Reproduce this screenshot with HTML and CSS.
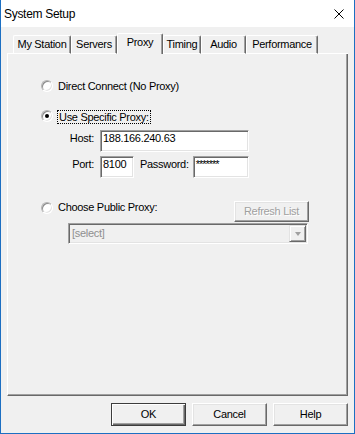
FILE: index.html
```html
<!DOCTYPE html>
<html lang="en">
<head>
    <meta charset="UTF-8">
    <title>System Setup</title>
    <link rel="stylesheet" href="styles.css">
</head>
<body>
    <div class="window">
        <div class="titlebar">
            <span class="title">System Setup</span>
            <svg class="close" width="10" height="10" viewBox="0 0 10 10">
                <path d="M0.5 0.5 L9.5 9.5 M9.5 0.5 L0.5 9.5" stroke="#000" stroke-width="1" fill="none"/>
            </svg>
        </div>

        <div class="client">
            <div class="tabstrip">
                <span class="strip-edge"></span>
                <div class="tab tab-station">My Station</div>
                <div class="tab tab-servers">Servers</div>
                <div class="tab tab-proxy active">Proxy</div>
                <div class="tab tab-timing">Timing</div>
                <div class="tab tab-audio">Audio</div>
                <div class="tab tab-perf">Performance</div>
                <span class="strip-fill"></span>
            </div>

            <div class="panel">
                <div class="option">
                    <span class="radio"></span>
                    <span class="option-text">Direct Connect (No Proxy)</span>
                </div>

                <div class="option option-specific">
                    <span class="radio checked"></span>
                    <span class="option-text focus">Use Specific Proxy:</span>
                </div>

                <div class="fields">
                    <div class="field-row">
                        <span class="field-label">Host:</span>
                        <span class="edit edit-host">188.166.240.63</span>
                    </div>
                    <div class="field-row">
                        <span class="field-label">Port:</span>
                        <span class="edit edit-port">8100</span>
                        <span class="pw-label">Password:</span>
                        <span class="edit edit-pass">*******</span>
                    </div>
                </div>

                <div class="option option-public">
                    <span class="radio"></span>
                    <span class="option-text">Choose Public Proxy:</span>
                    <span class="btn btn-refresh disabled">Refresh List</span>
                </div>

                <div class="combo">
                    <span class="combo-text">[select]</span>
                    <span class="combo-drop"><span class="arrow"></span></span>
                </div>
            </div>

            <div class="buttons">
                <span class="btn btn-default">OK</span>
                <span class="btn">Cancel</span>
                <span class="btn">Help</span>
            </div>
        </div>
    </div>
</body>
</html>
```

FILE: styles.css
```css
* {
    box-sizing: border-box;
}
body {
    margin: 0;
    font-family: "Liberation Sans", Arial, sans-serif;
    font-size: 11px;
    letter-spacing: -0.3px;
    color: #000;
}
.window {
    width: 355px;
    height: 434px;
    border: 1px solid #1c6fc2;
    border-top: none;
    display: flex;
    flex-direction: column;
    background: #f0f0f0;
}
.titlebar {
    height: 27px;
    background: #fff;
    display: flex;
    align-items: center;
    padding: 0 10px 0 3px;
}
.title {
    flex: 1;
    font-size: 12px;
}
.close {
    display: block;
}
.client {
    flex: 1;
    display: flex;
    flex-direction: column;
    padding: 6px 6px 7px;
}

/* tabs */
.tabstrip {
    height: 21px;
    display: flex;
    align-items: flex-end;
}
.strip-edge {
    width: 6px;
    border-bottom: 1px solid #fff;
}
.strip-fill {
    flex: 1;
    border-bottom: 1px solid #fff;
}
.tab {
    flex: none;
    height: 19px;
    padding-top: 2px;
    line-height: 13px;
    text-align: center;
    border: 1px solid #fff;
    border-right-color: #696969;
    border-radius: 2px 2px 0 0;
    box-shadow: inset -1px 0 0 #a0a0a0;
}
.tab.active {
    height: 21px;
    border-bottom: none;
}
.tab-station { width: 58px; }
.tab-servers { width: 46px; }
.tab-proxy { width: 46px; }
.tab-timing { width: 38px; }
.tab-audio { width: 45px; }
.tab-perf { width: 72px; }

/* page body */
.panel {
    flex: 1;
    display: flex;
    flex-direction: column;
    padding: 26px 38px 0 33px;
    border-left: 1px solid #fff;
    border-right: 1px solid #696969;
    border-bottom: 1px solid #696969;
    box-shadow: inset -1px -1px 0 #a0a0a0;
}
.option {
    display: flex;
    align-items: flex-start;
    line-height: 13px;
}
.option-text {
    margin-left: 5px;
}
.option-specific {
    margin-top: 17px;
}
.option-specific .focus {
    margin-left: 4px;
    padding: 0 1px;
    line-height: 12px;
    border: 1px dotted #000;
}
.option-public {
    margin-top: 23px;
}
.option-public .radio {
    margin-top: 1px;
}
.radio {
    flex: none;
    width: 12px;
    height: 12px;
    border-radius: 50%;
    background: #fff;
    border: 1px solid;
    border-color: #b4b4b4 #fff #fff #b4b4b4;
    box-shadow: inset 1px 1px 0 #8c8c8c, inset -1px -1px 0 #e3e3e3;
    display: flex;
    align-items: center;
    justify-content: center;
}
.radio.checked::after {
    content: "";
    width: 4px;
    height: 4px;
    border-radius: 50%;
    background: #000;
}

.fields {
    margin: 6px 0 0 17px;
    display: flex;
    flex-direction: column;
    gap: 4px;
}
.field-row {
    display: flex;
    align-items: flex-start;
    line-height: 13px;
}
.field-label {
    width: 36px;
    padding-top: 2px;
    text-align: right;
    margin-right: 6px;
}
.pw-label {
    padding-top: 2px;
    margin: 0 4px 0 6px;
}
.edit {
    height: 22px;
    padding: 1px 2px;
    background: #fff;
    white-space: nowrap;
    overflow: hidden;
    border: 1px solid;
    border-color: #a0a0a0 #fff #fff #a0a0a0;
    box-shadow: inset 1px 1px 0 #696969, inset -1px -1px 0 #e3e3e3;
}
.edit-host { width: 149px; }
.edit-port { width: 34px; }
.edit-pass { width: 56px; letter-spacing: -1px; }

.combo {
    margin: 1px 0 0 27px;
    width: 240px;
    height: 21px;
    display: flex;
    justify-content: space-between;
    padding: 2px 1px 1px 2px;
    color: #8f8f8f;
    line-height: 15px;
    border: 1px solid;
    border-color: #a0a0a0 #fff #fff #a0a0a0;
    box-shadow: inset 1px 1px 0 #696969, inset -1px -1px 0 #e3e3e3;
}
.combo-text {
    padding-left: 1px;
}
.combo-drop {
    width: 17px;
    height: 17px;
    margin-top: -1px;
    display: flex;
    align-items: center;
    justify-content: center;
    border: 1px solid;
    border-color: #e3e3e3 #696969 #696969 #e3e3e3;
    box-shadow: inset 1px 1px 0 #fff, inset -1px -1px 0 #a0a0a0;
}
.arrow {
    width: 0;
    height: 0;
    border-left: 3.5px solid transparent;
    border-right: 3.5px solid transparent;
    border-top: 4px solid #a0a0a0;
}

/* push buttons */
.btn {
    width: 75px;
    height: 23px;
    line-height: 21px;
    text-align: center;
    background: #f0f0f0;
    border: 1px solid;
    border-color: #fff #696969 #696969 #fff;
    box-shadow: inset -1px -1px 0 #a0a0a0, inset 1px 1px 0 #e3e3e3;
}
.btn-default {
    border-color: #3c3c3c;
    box-shadow: inset 1px 1px 0 #fff, inset -1px -1px 0 #696969, inset -2px -2px 0 #a0a0a0;
}
.btn-refresh {
    margin-left: auto;
    height: 21px;
    line-height: 19px;
}
.disabled {
    color: #a0a0a0;
    text-shadow: 1px 1px 0 #fff;
}
.buttons {
    margin-top: 7px;
    display: flex;
    justify-content: flex-end;
    gap: 6px;
}
```
